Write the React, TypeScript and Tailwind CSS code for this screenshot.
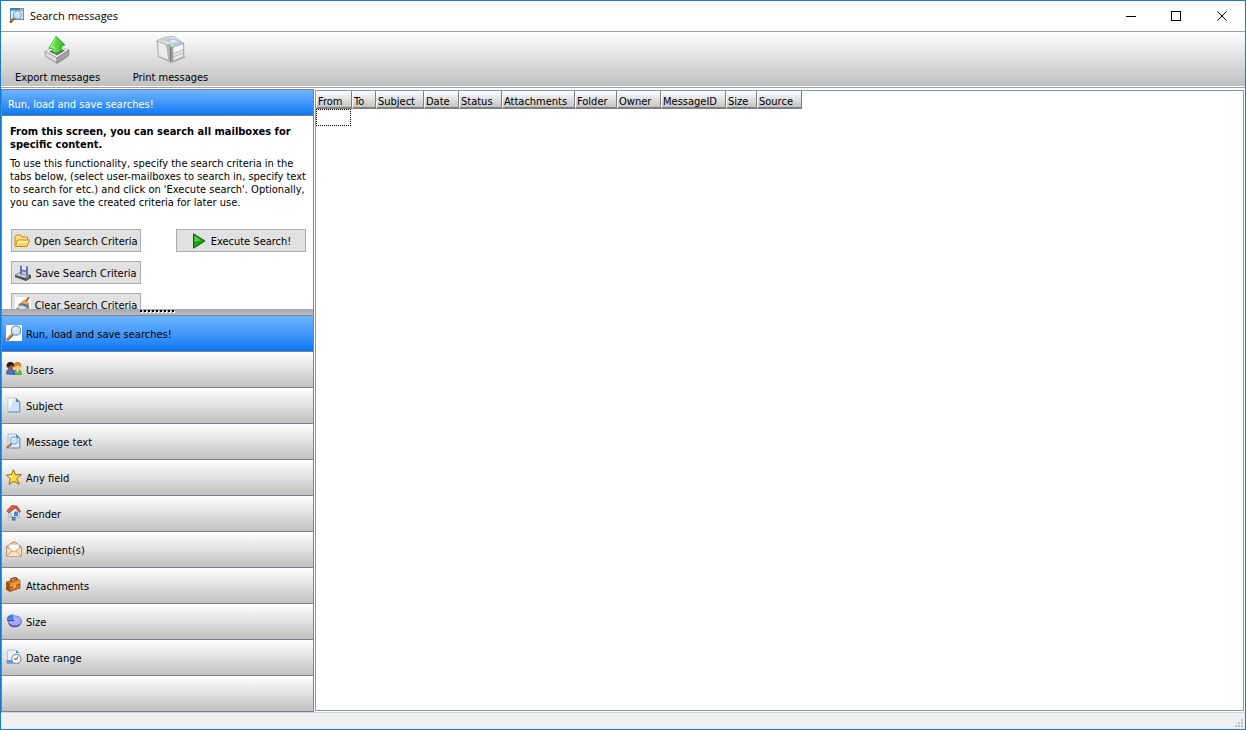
import type { ReactNode } from "react";

const COLUMNS = [
  { label: "From", width: 36 },
  { label: "To", width: 24 },
  { label: "Subject", width: 48 },
  { label: "Date", width: 35 },
  { label: "Status", width: 43 },
  { label: "Attachments", width: 73 },
  { label: "Folder", width: 42 },
  { label: "Owner", width: 44 },
  { label: "MessageID", width: 65 },
  { label: "Size", width: 31 },
  { label: "Source", width: 45 },
];

/* ---------- Icons ---------- */

function WindowIcon() {
  return (
    <svg width="16" height="16" viewBox="0 0 16 16" aria-hidden="true">
      <rect x="1.5" y="0.5" width="13" height="11" fill="#dcebf8" stroke="#5a8cc4" />
      <rect x="1" y="0" width="14" height="2.5" fill="#3f7fc6" />
      <path d="M11 .5h1.500v1.500H11zM13 .5h1.500v1.500H13z" fill="#f3c070" />
      <circle cx="8.5" cy="7" r="4" fill="#c3e4f8" stroke="#8fa0b0" strokeWidth="1.2" />
      <path d="M6.5 6a2.500 2.500 0 0 1 3-1.200" stroke="#fff" fill="none" />
      <path d="M5.500 10L1 14.500" stroke="#7d4a26" strokeWidth="2.400" />
      <path d="M5.500 10L2.500 13" stroke="#e9ad62" />
    </svg>
  );
}

function ExportIcon() {
  return (
    <svg width="32" height="32" viewBox="0 0 32 32" aria-hidden="true">
      <defs>
        <linearGradient id="arrow" x1="0" y1="0" x2="1" y2="0">
          <stop offset="0" stopColor="#8df46a" />
          <stop offset="1" stopColor="#28b51c" />
        </linearGradient>
      </defs>
      <path d="M2 23l13 8 14-9-12 3z" fill="#777" opacity="0.4" />
      <path d="M1.500 17l13-6L28 15.500 15 24z" fill="#f7f7f7" stroke="#aaa" strokeWidth="0.8" />
      <path d="M6 17l9-4 9 3-9 5.500z" fill="#6f6f6f" />
      <path d="M1.500 17L15 24v6L2 22z" fill="#dedede" stroke="#8b8b8b" strokeWidth="0.8" />
      <path d="M28 15.500L15 24v6l13-9z" fill="#a3a3a3" stroke="#777" strokeWidth="0.8" />
      <path
        d="M14 .5L23.500 10 19.500 11V17l-6 2-3-1.500V13.500L6 13.500z"
        fill="url(#arrow)"
        stroke="#179c15"
        strokeWidth="0.9"
        strokeLinejoin="round"
      />
      <path d="M14 2L7.500 12.500l4-.3v5" fill="none" stroke="#b7ff98" strokeWidth="0.9" />
    </svg>
  );
}

function PrintIcon() {
  return (
    <svg width="32" height="32" viewBox="0 0 32 32" aria-hidden="true">
      <path d="M2 23l14 7 16-6-2-4z" fill="#777" opacity="0.4" />
      <path d="M.5 5L10 1l9-.5L30 8l-1 2-14 4L1 7z" fill="#e9e9e9" stroke="#a2a2a2" strokeWidth="0.8" />
      <path d="M2 4.500L11 1.500l6 .5-5 4.500z" fill="#cfcfcf" />
      <path d="M12 5l7-2 9 4.500-9 2.500z" fill="#a9d8fa" stroke="#8fa8ba" strokeWidth="0.6" />
      <path d="M14 5.500l5-1.500 4 2-5 1.500z" fill="#e8f6ff" />
      <path d="M.5 5.500L11 9l4.500 19L2 22.500z" fill="#d6d6d6" stroke="#9c9c9c" strokeWidth="0.8" />
      <path d="M2 7l8 3 3.500 16L3 21.500z" fill="#ebebeb" />
      <path d="M11 8.500l7 3V28l-3 .5-2-1z" fill="#b4b4b4" />
      <path d="M15 12l1.500.6V28H15z" fill="#6f6f6f" />
      <path d="M18 12l12-4v15l-12 5z" fill="#e6e6e6" stroke="#8c8c8c" strokeWidth="0.8" />
      <path d="M18.500 19.500L30 15M18.500 23L30 18.500" stroke="#ababab" strokeWidth="0.8" />
      <path d="M19 13l10-3.300v4.500L19 18z" fill="#f8f8f8" />
      <path d="M13 8.500l3 1.200V11l-3-1z" fill="#55c83c" />
    </svg>
  );
}

function FolderIcon() {
  return (
    <svg width="16" height="16" viewBox="0 0 16 16" aria-hidden="true">
      <path d="M1 13V3.500L2.500 2h4L8 4h5.500v4" fill="#ffe27a" stroke="#c48a12" />
      <path d="M3.500 7h12L13 13.500H1.500z" fill="#fff0a0" stroke="#c48a12" strokeLinejoin="round" />
      <path d="M4 10h9.500l-1.300 3H2.500z" fill="#fbd55b" />
    </svg>
  );
}

function SaveIcon() {
  return (
    <svg width="16" height="16" viewBox="0 0 16 16" aria-hidden="true">
      <path d="M0 10l6-3 10 3v3l-5 3L0 12z" fill="#4b4b52" />
      <path d="M0 10l6-3 9 3-5 3z" fill="#d4d4da" stroke="#77777f" strokeWidth="0.6" />
      <path d="M5 .5l8 1V11L5 9.500z" fill="#6f6cb8" />
      <path d="M7 .8l4 .5v4L7 4.500z" fill="#e6e8fa" />
      <path d="M7 6.500l4 .6V10l-4-.7z" fill="#c6c6e2" />
      <path d="M11 14l3-1.500" stroke="#56d856" />
    </svg>
  );
}

function ClearIcon() {
  return (
    <svg width="16" height="16" viewBox="0 0 16 16" aria-hidden="true">
      <rect width="16" height="16" fill="#fff" />
      <path d="M14 0L10.500 5" stroke="#b0612b" strokeWidth="2" />
      <path d="M3 8.500L9.500 3l4 3v4z" fill="#f3a63b" stroke="#b76a1c" strokeWidth="0.6" />
      <path d="M6 6l7.500 2v2.500L4 8z" fill="#3977bd" />
      <path d="M1 11l6-3 8 2.500-4 4.500-9-2z" fill="#8f8f98" />
      <path d="M2 10.500l5-2 5 2.500-4 2z" fill="#dcdcdc" />
    </svg>
  );
}

function PlayIcon() {
  return (
    <svg width="16" height="16" viewBox="0 0 16 16" aria-hidden="true">
      <path d="M2.500.8L14 8 2.500 15.200z" fill="#1d9a17" stroke="#0b5d0b" strokeLinejoin="round" />
      <path d="M3.500 2.800L10 7.200 3.500 9z" fill="#52cf43" />
    </svg>
  );
}

function MagnifierIcon() {
  return (
    <svg width="16" height="16" viewBox="0 0 16 16" aria-hidden="true">
      <rect width="16" height="16" fill="#fff" />
      <circle cx="10" cy="5.500" r="4.700" fill="#c7e9fb" stroke="#7b93ab" strokeWidth="1.200" />
      <path d="M7.500 5A3 3 0 0 1 11 2.700" stroke="#fff" strokeWidth="1.300" fill="none" />
      <path d="M6.500 9.500L1 15" stroke="#87451e" strokeWidth="2.600" />
      <path d="M6 9.500L1.500 14" stroke="#eea257" strokeWidth="1.100" />
    </svg>
  );
}

function UsersIcon() {
  return (
    <svg width="16" height="16" viewBox="0 0 16 16" aria-hidden="true">
      <path d="M7.500 13.500c0-4 1-5 3.800-5s4.200 1.500 4.200 5z" fill="#6cbb3c" stroke="#347b1c" strokeWidth="0.6" />
      <path d="M.5 13C.5 9 2 8 4.500 8S8.500 9 8.500 13.500z" fill="#3a78dc" stroke="#1c438e" strokeWidth="0.6" />
      <circle cx="4.500" cy="5.500" r="3" fill="#a85a2c" />
      <path d="M.7 6c-.4-3.500 1-5 3.800-5S8.600 2.500 8 5.500L5.500 4 2 6.500z" fill="#26201f" />
      <circle cx="11.500" cy="6" r="3" fill="#f6c48e" />
      <path d="M8.300 6.500c-.8-4 .7-5.500 3.200-5.500s4.500 1.700 3.500 5.500L12.500 4z" fill="#dd7d22" />
      <path d="M10.500 9h2l-.8 3z" fill="#fff" />
      <path d="M3.500 8.500h2l-.8 2.500z" fill="#e5522b" />
    </svg>
  );
}

function PageIcon() {
  return (
    <svg width="16" height="16" viewBox="0 0 16 16" aria-hidden="true">
      <path d="M2 1h8l4 4v10H2z" fill="#cfe3f8" stroke="#a9c4e2" strokeWidth="0.8" />
      <path d="M2.500 1.500h6L2.500 13z" fill="#f3f9ff" />
      <path d="M10 1v4h4z" fill="#4f86c6" />
      <path d="M13.700 5v10H2" stroke="#6d92c0" fill="none" />
    </svg>
  );
}

function PageSearchIcon() {
  return (
    <svg width="16" height="16" viewBox="0 0 16 16" aria-hidden="true">
      <path d="M2 1h8l4 4v10H2z" fill="#dcebfa" stroke="#9bb8da" strokeWidth="0.8" />
      <path d="M10 1v4h4z" fill="#4f86c6" />
      <path d="M13.700 5v10H4" stroke="#6d92c0" fill="none" />
      <circle cx="8" cy="7.500" r="3.700" fill="#c1e5f8" stroke="#8aa3b8" />
      <path d="M6.500 7A2 2 0 0 1 8.500 5.500" stroke="#fff" fill="none" />
      <path d="M5.500 10.500L1 15" stroke="#9b5528" strokeWidth="2" />
      <path d="M5 10.500L1.500 14" stroke="#e7a868" strokeWidth="0.9" />
    </svg>
  );
}

function StarIcon() {
  return (
    <svg width="16" height="16" viewBox="0 0 16 16" aria-hidden="true">
      <path
        d="M7.500.8l2 5 6-.3-4.700 4 2.500 5.700L8 12.300 3 15.500l1.200-5.700L.5 6l5-.4z"
        fill="#ffdc3d"
        stroke="#9b6b17"
        strokeLinejoin="round"
      />
      <path d="M7.500 3L6.300 6.500 3 7l2.500 2.500z" fill="#fff6a8" />
    </svg>
  );
}

function HouseIcon() {
  return (
    <svg width="16" height="16" viewBox="0 0 16 16" aria-hidden="true">
      <path d="M2.500 6L8 2.500 13 6v6.500l-6 1-4.500-2z" fill="#eef4fb" stroke="#8fa4bb" strokeWidth="0.7" />
      <path d="M.8 6L5.500.7l5.500.3 3.700 5.500-1.200.8L9.500 3 3 8z" fill="#d95c36" stroke="#8f3219" strokeWidth="0.6" />
      <path d="M8 6.500h4V11l-4 .5z" fill="#3c8de0" />
      <path d="M4 8h2v4l-2-.8z" fill="#a7bdd4" />
      <path d="M1.500 13c3-1.500 10-1.500 12.500-.3" stroke="#b8c4cf" strokeWidth="1.500" fill="none" />
      <rect x="6" y="12" width="3.500" height="3.500" fill="#4a5d73" />
      <path d="M7 13.500h2" stroke="#58d8e5" />
    </svg>
  );
}

function EnvelopeIcon() {
  return (
    <svg width="16" height="16" viewBox="0 0 16 16" aria-hidden="true">
      <path d="M.8 5.500L8 .7l7.200 4.800V15H.8z" fill="#f3cea0" stroke="#a8713e" strokeWidth="0.9" />
      <path d="M3 3.500h10V9l-5 3-5-3z" fill="#fff" stroke="#c4ccd4" strokeWidth="0.6" />
      <path d="M1 6l7 5 7-5v9H1z" fill="#fbe3c2" />
      <path d="M1 6l7 5 7-5M1 15l5-5.300M15 15l-5-5.300" stroke="#b98551" strokeWidth="0.8" fill="none" />
    </svg>
  );
}

function BriefcaseIcon() {
  return (
    <svg width="16" height="16" viewBox="0 0 16 16" aria-hidden="true">
      <path d="M5 4V2l4-1.300L11 1.500V3" stroke="#6d3510" strokeWidth="1.200" fill="none" />
      <path d="M.5 5L11 2l3 1.500V11L4 14.500.5 12.500z" fill="#d27420" stroke="#7e3a0d" strokeWidth="0.7" />
      <path d="M4 6.500l10-3V7L4 10.500z" fill="#ee9436" />
      <path d="M.5 5L4 6.500v8l-3.500-2z" fill="#a8500f" />
      <path d="M4 10.500L14 7" stroke="#9a4a10" strokeWidth="0.8" />
      <path d="M7.500 8.500v2.300l2-.6V7.800z" fill="#ffe08a" />
    </svg>
  );
}

function PieIcon() {
  return (
    <svg width="16" height="16" viewBox="0 0 16 16" aria-hidden="true">
      <path d="M2 8.500c0 8 13.500 7.500 13.500 0V7.500H2z" fill="#4e4ba9" />
      <ellipse cx="8.800" cy="7.800" rx="6.700" ry="5" fill="#a3a9f2" stroke="#6664c8" strokeWidth="0.7" />
      <path d="M8 6.500H.3C.5 3 3.500 1 8 1z" fill="#3e7ee6" stroke="#e8ecff" strokeWidth="0.7" />
      <path d="M.5 6.500H8V8H1.500z" fill="#254fa5" />
    </svg>
  );
}

function DateIcon() {
  return (
    <svg width="16" height="16" viewBox="0 0 16 16" aria-hidden="true">
      <path d="M1.500 1H10l3 3v10.500H1.500z" fill="#e8f2fd" stroke="#a3bede" strokeWidth="0.8" />
      <path d="M.5 11H7v3.500H.5z" fill="#5b95e0" />
      <path d="M10 1v3h3z" fill="#4f86c6" />
      <circle cx="10.300" cy="10" r="4.600" fill="#f6f8fa" stroke="#8795a3" strokeWidth="1.200" />
      <path d="M10.300 10.500L12 7.500M10.300 10.500L8 9.500" stroke="#394b5e" />
    </svg>
  );
}

const NAV_ITEMS = [
  { label: "Run, load and save searches!", icon: <MagnifierIcon />, active: true },
  { label: "Users", icon: <UsersIcon /> },
  { label: "Subject", icon: <PageIcon /> },
  { label: "Message text", icon: <PageSearchIcon /> },
  { label: "Any field", icon: <StarIcon /> },
  { label: "Sender", icon: <HouseIcon /> },
  { label: "Recipient(s)", icon: <EnvelopeIcon /> },
  { label: "Attachments", icon: <BriefcaseIcon /> },
  { label: "Size", icon: <PieIcon /> },
  { label: "Date range", icon: <DateIcon /> },
];

/* ---------- Window parts ---------- */

function TitleBar() {
  return (
    <header className="flex h-[31px] shrink-0 items-center border-b border-[#a0a0a0] bg-white pl-2">
      <WindowIcon />
      <h1 className="ml-[5px] flex-1 font-['Open_Sans','Noto_Sans',sans-serif] text-[11px] leading-4">
        Search messages
      </h1>
      <button type="button" aria-label="Minimize" className="flex h-full w-[46px] items-center justify-center">
        <svg width="11" height="11" viewBox="0 0 11 11">
          <path d="M1 5.500h10" stroke="#000" />
        </svg>
      </button>
      <button type="button" aria-label="Maximize" className="flex h-full w-[46px] items-center justify-center">
        <svg width="11" height="11" viewBox="0 0 11 11">
          <rect x="0.5" y="0.5" width="9" height="9" fill="none" stroke="#000" />
        </svg>
      </button>
      <button type="button" aria-label="Close" className="flex h-full w-[46px] items-center justify-center">
        <svg width="11" height="11" viewBox="0 0 11 11">
          <path d="M.5.5l9 9M9.500.5l-9 9" stroke="#000" />
        </svg>
      </button>
    </header>
  );
}

function ToolButton({ icon, children }: { icon: ReactNode; children: ReactNode }) {
  return (
    <button type="button" className="flex w-[113px] flex-col items-center gap-[5px] pt-1 leading-4 whitespace-nowrap">
      {icon}
      <span>{children}</span>
    </button>
  );
}

function CriteriaButton({ icon, children }: { icon: ReactNode; children: ReactNode }) {
  return (
    <button
      type="button"
      className="flex h-[23px] w-[130px] items-center justify-center gap-1 border border-[#adadad] bg-[#e1e1e1] whitespace-nowrap"
    >
      {icon}
      <span className="pt-0.5">{children}</span>
    </button>
  );
}

function SearchPanel() {
  return (
    <aside className="flex w-[313px] shrink-0 flex-col border border-b-0 border-[#808090]">
      <h2 className="flex h-[26px] shrink-0 items-center border-b border-[#808090] bg-linear-to-b from-[#6db5ff] to-[#0078f4] px-1.5 pt-1 text-white">
        Run, load and save searches!
      </h2>

      <div className="min-h-0 flex-1 overflow-hidden bg-white pt-[9px] pr-[7px] pl-2">
        <p className="font-bold leading-[13px]">
          From this screen, you can search all mailboxes for specific content.
        </p>
        <p className="mt-1.5 leading-[13px] whitespace-nowrap">
          To use this functionality, specify the search criteria in the
          <br />
          tabs below, (select user-mailboxes to search in, specify text
          <br />
          to search for etc.) and click on 'Execute search'. Optionally,
          <br />
          you can save the created criteria for later use.
        </p>
        <div className="mt-5 flex justify-between pl-px">
          <div className="flex flex-col gap-[9px]">
            <CriteriaButton icon={<FolderIcon />}>Open Search Criteria</CriteriaButton>
            <CriteriaButton icon={<SaveIcon />}>Save Search Criteria</CriteriaButton>
            <CriteriaButton icon={<ClearIcon />}>Clear Search Criteria</CriteriaButton>
          </div>
          <CriteriaButton icon={<PlayIcon />}>Execute Search!</CriteriaButton>
        </div>
      </div>

      {/* Splitter grip */}
      <div className="flex h-[7px] shrink-0 justify-center border-b border-[#808090] bg-linear-to-b from-[#a6a6b2] to-[#bcbcc4] pt-px">
        <svg width="36" height="3" viewBox="0 0 36 3" aria-hidden="true">
          <path d="M1 2h35" stroke="#fff" strokeWidth="2" strokeDasharray="2 2" />
          <path d="M0 1h36" stroke="#000" strokeWidth="2" strokeDasharray="2 2" />
        </svg>
      </div>

      <nav className="shrink-0">
        {NAV_ITEMS.map((item) => (
          <button
            key={item.label}
            type="button"
            className={`flex h-9 w-full items-center gap-1 border-b border-[#808090] bg-linear-to-b px-1 pb-0.5 text-left ${
              item.active ? "from-[#6db5ff] to-[#0078f4]" : "from-white to-[#c2c2c2]"
            }`}
          >
            {item.icon}
            <span className="pt-1">{item.label}</span>
          </button>
        ))}
        <div className="h-9 border-b border-[#808090] bg-linear-to-b from-white to-[#c2c2c2]" />
      </nav>
    </aside>
  );
}

function ResultsGrid() {
  return (
    <main className="m-px min-w-0 flex-1 overflow-hidden border border-[#7f9db9] bg-white">
      <table className="w-[486px] table-fixed border-collapse">
        <colgroup>
          {COLUMNS.map((col) => (
            <col key={col.label} style={{ width: col.width }} />
          ))}
        </colgroup>
        <thead>
          <tr className="h-[18px]">
            {COLUMNS.map((col) => (
              <th key={col.label} scope="col" className="p-0 text-left font-normal">
                <div className="h-[18px] overflow-hidden border-r border-b-2 border-l border-r-[#808080] border-b-[#808080] border-l-white bg-linear-to-b from-white to-[#c4c4c4] pt-1 pl-px leading-[14px] whitespace-nowrap">
                  {col.label}
                </div>
              </th>
            ))}
          </tr>
        </thead>
        <tbody>
          <tr>
            <td className="p-0">
              <div className="h-[17px] w-[35px] border border-dotted border-black" />
            </td>
            <td colSpan={COLUMNS.length - 1} />
          </tr>
        </tbody>
      </table>
    </main>
  );
}

export default function App() {
  return (
    <div className="flex h-screen flex-col overflow-hidden border border-[#1979ca] bg-white font-['DejaVu_Sans_Condensed','DejaVu_Sans',sans-serif] text-[11px] leading-[14px] text-black">
      <TitleBar />

      <div className="flex h-[54px] shrink-0 bg-linear-to-b from-white to-[#c0c0c0]">
        <ToolButton icon={<ExportIcon />}>Export messages</ToolButton>
        <ToolButton icon={<PrintIcon />}>Print messages</ToolButton>
      </div>
      <div className="my-px h-px shrink-0 bg-[#a0a0a0]" />

      <div className="flex min-h-0 flex-1">
        <SearchPanel />
        <ResultsGrid />
      </div>

      <footer className="flex h-[17px] shrink-0 items-end justify-end border-t border-[#d7d7d7] bg-[#f0f0f0] p-0.5">
        <svg width="8" height="8" viewBox="0 0 8 8" fill="#bfbfbf" aria-hidden="true">
          <path d="M6 0h2v2H6zM3 3h2v2H3zM6 3h2v2H6zM0 6h2v2H0zM3 6h2v2H3zM6 6h2v2H6z" />
        </svg>
      </footer>
    </div>
  );
}
